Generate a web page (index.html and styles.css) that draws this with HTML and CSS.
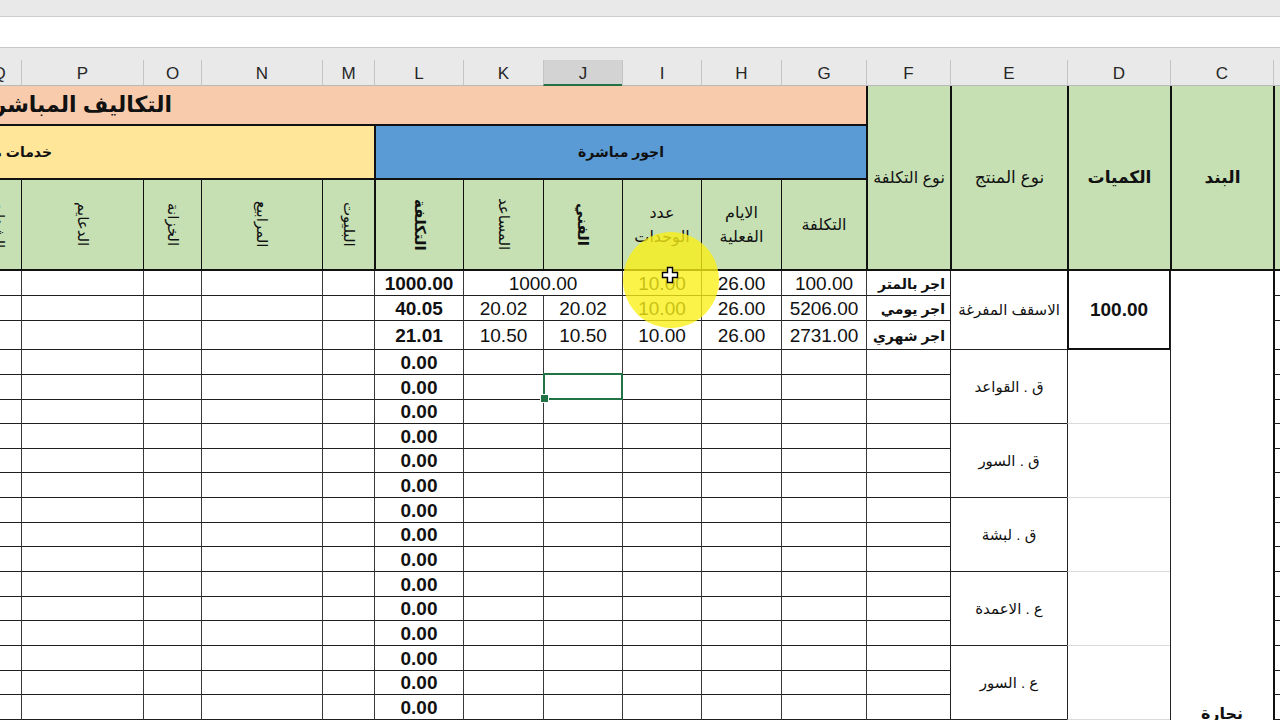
FILE: index.html
```html
<!DOCTYPE html>
<html lang="ar">
<head>
<meta charset="utf-8">
<title>Sheet</title>
<link rel="stylesheet" href="styles.css">
</head>
<body>
<div class="topband"></div>
<div class="fbar"></div>
<div class="colbar">
  <div class="cl"></div>
  <div class="cl">C</div>
  <div class="cl">D</div>
  <div class="cl">E</div>
  <div class="cl">F</div>
  <div class="cl">G</div>
  <div class="cl">H</div>
  <div class="cl">I</div>
  <div class="cl cl-sel">J</div>
  <div class="cl">K</div>
  <div class="cl">L</div>
  <div class="cl">M</div>
  <div class="cl">N</div>
  <div class="cl">O</div>
  <div class="cl">P</div>
  <div class="cl">Q</div>
</div>

<div class="sheet">
  <!-- merged header blocks -->
  <div class="hv hb"></div>
  <div class="hv hc bold">البند</div>
  <div class="hv hd bold">الكميات</div>
  <div class="hv he">نوع المنتج</div>
  <div class="hv hf">نوع التكلفة</div>
  <div class="title">التكاليف المباشرة</div>
  <div class="blue">اجور مباشرة</div>
  <div class="yellow">خدمات مباشرة</div>

  <!-- merged data blocks -->
  <div class="cm">نجارة</div>
  <div class="dg dg1 g1">100.00</div>
  <div class="dg g2"></div>
  <div class="dg g3"></div>
  <div class="dg g4"></div>
  <div class="dg g5"></div>
  <div class="dg g6"></div>
  <div class="eg g1">الاسقف المفرغة</div>
  <div class="eg g2">ق . القواعد</div>
  <div class="eg g3">ق . السور</div>
  <div class="eg g4">ق . لبشة</div>
  <div class="eg g5">ع . الاعمدة</div>
  <div class="eg g6">ع . السور</div>

  <!-- header row 3 -->
  <div class="h3">التكلفة</div>
  <div class="h3">الايام<br>الفعلية</div>
  <div class="h3">عدد<br>الوحدات</div>
  <div class="h3"><span class="rot bold">الفني</span></div>
  <div class="h3"><span class="rot">المساعد</span></div>
  <div class="h3 h3l"><span class="rot bold">التكلفة</span></div>
  <div class="h3"><span class="rot">البليوت</span></div>
  <div class="h3"><span class="rot">المرابيع</span></div>
  <div class="h3"><span class="rot">الخزانة</span></div>
  <div class="h3"><span class="rot">الدعايم</span></div>
  <div class="h3"><span class="rot">الشدات</span></div>

  <!-- data row 1 -->
  <div class="c b"></div><div class="c f">اجر بالمتر</div><div class="c">100.00</div><div class="c">26.00</div><div class="c">10.00</div><div class="c span2">1000.00</div><div class="c bold">1000.00</div><div class="c"></div><div class="c"></div><div class="c"></div><div class="c"></div><div class="c"></div>
  <!-- data row 2 -->
  <div class="c b"></div><div class="c f">اجر يومي</div><div class="c">5206.00</div><div class="c">26.00</div><div class="c">10.00</div><div class="c">20.02</div><div class="c">20.02</div><div class="c bold">40.05</div><div class="c"></div><div class="c"></div><div class="c"></div><div class="c"></div><div class="c"></div>
  <!-- data row 3 -->
  <div class="c b"></div><div class="c f">اجر شهري</div><div class="c">2731.00</div><div class="c">26.00</div><div class="c">10.00</div><div class="c">10.50</div><div class="c">10.50</div><div class="c bold">21.01</div><div class="c"></div><div class="c"></div><div class="c"></div><div class="c"></div><div class="c"></div>

  <!-- rows 4-18 -->
  <div class="c b"></div><div class="c"></div><div class="c"></div><div class="c"></div><div class="c"></div><div class="c"></div><div class="c"></div><div class="c bold">0.00</div><div class="c"></div><div class="c"></div><div class="c"></div><div class="c"></div><div class="c"></div>
  <div class="c b"></div><div class="c"></div><div class="c"></div><div class="c"></div><div class="c"></div><div class="c sel"></div><div class="c"></div><div class="c bold">0.00</div><div class="c"></div><div class="c"></div><div class="c"></div><div class="c"></div><div class="c"></div>
  <div class="c b"></div><div class="c"></div><div class="c"></div><div class="c"></div><div class="c"></div><div class="c"></div><div class="c"></div><div class="c bold">0.00</div><div class="c"></div><div class="c"></div><div class="c"></div><div class="c"></div><div class="c"></div>
  <div class="c b"></div><div class="c"></div><div class="c"></div><div class="c"></div><div class="c"></div><div class="c"></div><div class="c"></div><div class="c bold">0.00</div><div class="c"></div><div class="c"></div><div class="c"></div><div class="c"></div><div class="c"></div>
  <div class="c b"></div><div class="c"></div><div class="c"></div><div class="c"></div><div class="c"></div><div class="c"></div><div class="c"></div><div class="c bold">0.00</div><div class="c"></div><div class="c"></div><div class="c"></div><div class="c"></div><div class="c"></div>
  <div class="c b"></div><div class="c"></div><div class="c"></div><div class="c"></div><div class="c"></div><div class="c"></div><div class="c"></div><div class="c bold">0.00</div><div class="c"></div><div class="c"></div><div class="c"></div><div class="c"></div><div class="c"></div>
  <div class="c b"></div><div class="c"></div><div class="c"></div><div class="c"></div><div class="c"></div><div class="c"></div><div class="c"></div><div class="c bold">0.00</div><div class="c"></div><div class="c"></div><div class="c"></div><div class="c"></div><div class="c"></div>
  <div class="c b"></div><div class="c"></div><div class="c"></div><div class="c"></div><div class="c"></div><div class="c"></div><div class="c"></div><div class="c bold">0.00</div><div class="c"></div><div class="c"></div><div class="c"></div><div class="c"></div><div class="c"></div>
  <div class="c b"></div><div class="c"></div><div class="c"></div><div class="c"></div><div class="c"></div><div class="c"></div><div class="c"></div><div class="c bold">0.00</div><div class="c"></div><div class="c"></div><div class="c"></div><div class="c"></div><div class="c"></div>
  <div class="c b"></div><div class="c"></div><div class="c"></div><div class="c"></div><div class="c"></div><div class="c"></div><div class="c"></div><div class="c bold">0.00</div><div class="c"></div><div class="c"></div><div class="c"></div><div class="c"></div><div class="c"></div>
  <div class="c b"></div><div class="c"></div><div class="c"></div><div class="c"></div><div class="c"></div><div class="c"></div><div class="c"></div><div class="c bold">0.00</div><div class="c"></div><div class="c"></div><div class="c"></div><div class="c"></div><div class="c"></div>
  <div class="c b"></div><div class="c"></div><div class="c"></div><div class="c"></div><div class="c"></div><div class="c"></div><div class="c"></div><div class="c bold">0.00</div><div class="c"></div><div class="c"></div><div class="c"></div><div class="c"></div><div class="c"></div>
  <div class="c b"></div><div class="c"></div><div class="c"></div><div class="c"></div><div class="c"></div><div class="c"></div><div class="c"></div><div class="c bold">0.00</div><div class="c"></div><div class="c"></div><div class="c"></div><div class="c"></div><div class="c"></div>
  <div class="c b"></div><div class="c"></div><div class="c"></div><div class="c"></div><div class="c"></div><div class="c"></div><div class="c"></div><div class="c bold">0.00</div><div class="c"></div><div class="c"></div><div class="c"></div><div class="c"></div><div class="c"></div>
  <div class="c b"></div><div class="c"></div><div class="c"></div><div class="c"></div><div class="c"></div><div class="c"></div><div class="c"></div><div class="c bold">0.00</div><div class="c"></div><div class="c"></div><div class="c"></div><div class="c"></div><div class="c"></div>
</div>

<div class="spot"></div>
<svg class="cursor" width="18" height="18" viewBox="0 0 18 18"><path d="M6.5 1.5h5v5h5v5h-5v5h-5v-5h-5v-5h5z" fill="#fff" stroke="#000" stroke-width="1.4" stroke-linejoin="miter"/></svg>
</body>
</html>
```
FILE: styles.css
```css
:root {
  --cols: 7px 103px 103px 117px 84px 85px 80px 79px 79px 80px 89px 52px 121px 58px 122px 45px;
}
* { box-sizing: border-box; margin: 0; padding: 0; }
html, body { width: 1280px; height: 720px; overflow: hidden; background: #fff; }
body {
  font-family: "Liberation Sans", "DejaVu Sans", sans-serif;
  color: #111;
  position: relative;
}
.bold { font-weight: bold; }

.topband { height: 17px; background: #e9e9e9; border-bottom: 1px solid #cdcdcd; }
.fbar { height: 31px; background: #fff; border-bottom: 1px solid #c9c9c9; }

.colbar {
  height: 38px;
  padding-top: 12px;
  background: #e9e9e9;
  display: grid;
  direction: rtl;
  grid-template-columns: var(--cols);
}
.cl {
  display: flex;
  align-items: center;
  justify-content: center;
  padding-top: 3px;
  font-size: 17px;
  color: #262626;
  border-left: 1px solid #c4c4c4;
  border-bottom: 1px solid #b9b9b9;
}
.cl-sel { background: #d3d3d3; border-bottom: 2px solid #217346; }

.sheet {
  display: grid;
  direction: rtl;
  grid-template-columns: var(--cols);
  grid-template-rows: 40px 54px 91px 25px 25px 29px 25px 25px 24px 25px 24px 25px 25px 24px 25px 25px 24px 25px 25px 24px 25px;
}

/* merged header cells F..B */
.hv {
  grid-row: 1 / 4;
  background: #c6e0b4;
  border-left: 2px solid #111;
  border-bottom: 2px solid #111;
  display: flex;
  align-items: center;
  justify-content: center;
  font-size: 17px;
  white-space: nowrap;
}
.hb { grid-column: 1; }
.hc { grid-column: 2; }
.hd { grid-column: 3; }
.he { grid-column: 4; }
.hf { grid-column: 5; font-size: 16px; }

.title {
  grid-column: 6 / 17;
  grid-row: 1;
  background: #f8cbad;
  border-bottom: 2px solid #111;
  display: flex;
  align-items: center;
  padding-right: 694px;
  font-size: 22px;
  font-weight: bold;
  white-space: nowrap;
  overflow: hidden;
}
.blue {
  grid-column: 6 / 12;
  grid-row: 2;
  background: #5b9bd5;
  border-left: 2px solid #111;
  border-bottom: 2px solid #111;
  display: flex;
  align-items: center;
  justify-content: center;
  font-size: 14px;
  font-weight: bold;
}
.yellow {
  grid-column: 12 / 17;
  grid-row: 2;
  background: #ffe699;
  border-bottom: 2px solid #111;
  display: flex;
  align-items: center;
  padding-right: 322px;
  font-size: 14px;
  font-weight: bold;
  white-space: nowrap;
  overflow: hidden;
}

.h3 {
  background: #c6e0b4;
  border-left: 1px solid #111;
  border-bottom: 2px solid #111;
  display: flex;
  align-items: center;
  justify-content: center;
  text-align: center;
  font-size: 16px;
  line-height: 1.5;
  overflow: hidden;
}
.h3l { border-left: 2px solid #111; }
.rot { writing-mode: vertical-rl; font-size: 15px; white-space: nowrap; }

/* data cells */
.c {
  border-left: 1px solid #3a3a3a;
  border-bottom: 1px solid #1e1e1e;
  display: flex;
  align-items: center;
  justify-content: center;
  padding-top: 1px;
  font-size: 19px;
  white-space: nowrap;
}
.b { border-left: 2px solid #111; }
.f {
  justify-content: flex-start;
  padding-right: 5px;
  font-size: 14px;
  font-weight: bold;
}
.span2 { grid-column: span 2; }
.sel { position: relative; }
.sel::before {
  content: "";
  position: absolute;
  top: -2px; bottom: -1px; left: -1px; right: -1px;
  border: 2px solid #217346;
}
.sel::after {
  content: "";
  position: absolute;
  left: -4px; bottom: -4px;
  width: 7px; height: 7px;
  background: #217346;
  border: 1px solid #fff;
}

.cm {
  grid-column: 2;
  grid-row: 4 / 22;
  border-left: 1px solid #222;
  overflow: hidden;
  text-align: center;
  padding-top: 433px;
  font-size: 16px;
  font-weight: bold;
}
.dg {
  grid-column: 3;
  border-left: 1px solid #222;
  border-bottom: 1px solid #dadada;
  display: flex;
  align-items: center;
  justify-content: center;
  font-size: 19px;
}
.dg1 {
  border-left: 2px solid #111;
  border-right: 1px solid #111;
  border-bottom: 2px solid #111;
  font-weight: bold;
}
.eg {
  grid-column: 4;
  border-left: 1px solid #222;
  border-bottom: 1px solid #222;
  display: flex;
  align-items: center;
  justify-content: center;
  font-size: 15px;
  white-space: nowrap;
}
.g1 { grid-row: 4 / 7; }
.g2 { grid-row: 7 / 10; }
.g3 { grid-row: 10 / 13; }
.g4 { grid-row: 13 / 16; }
.g5 { grid-row: 16 / 19; }
.g6 { grid-row: 19 / 22; }

/* cursor highlight overlay */
.spot {
  position: absolute;
  left: 623px;
  top: 232px;
  width: 96px;
  height: 96px;
  border-radius: 50%;
  background: rgba(250, 240, 20, 0.78);
}
.cursor {
  position: absolute;
  left: 661px;
  top: 266px;
}
```
